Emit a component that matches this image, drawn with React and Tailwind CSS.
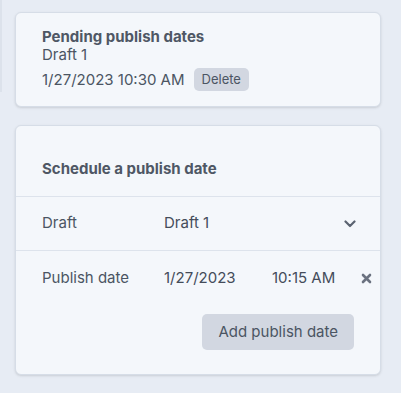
import React from 'react';

const Chevron = () => (
  <svg width="12" height="8" viewBox="0 0 12 8" fill="none">
    <path d="M1.5 1.5 6 6l4.5-4.5" stroke="#5b6371" strokeWidth="2.2" strokeLinecap="round" strokeLinejoin="round" />
  </svg>
);

const Cross = () => (
  <svg width="11" height="11" viewBox="0 0 11 11" fill="none">
    <path d="M2 2l7 7M9 2l-7 7" stroke="#6b7280" strokeWidth="2.6" strokeLinecap="round" />
  </svg>
);

const PendingCard = () => (
  <div className="bg-[#f4f7fb] border border-[#d6dde7] rounded-[6px] shadow-sm pl-[26px] pt-[15px] pb-[15px] text-[#4b5563] text-[15px]">
    <div className="leading-[18px] font-bold text-[#4f5765]">Pending publish dates</div>
    <div className="leading-[18px]">Draft 1</div>
    <div className="flex items-center gap-[9px] mt-[4px]">
      <span className="leading-[18px]">1/27/2023 10:30 AM</span>
      <button className="bg-[#d2d7e1] rounded-[5px] h-[23px] px-[8px] text-[13px] text-[#4b5563]">Delete</button>
    </div>
  </div>
);

const ScheduleCard = () => (
  <div className="bg-[#f4f7fb] border border-[#d6dde7] rounded-[6px] shadow-sm text-[#4b5563] text-[15px]">
    <div className="pl-[26px] pt-[33px] pb-[17px] border-b border-[#dde3ec]">
      <div className="leading-[20px] font-bold text-[#4f5765]">Schedule a publish date</div>
    </div>
    <div className="flex items-center h-[54px] pl-[26px] pr-[24px] border-b border-[#dde3ec]">
      <span className="w-[122px]">Draft</span>
      <span className="flex-1 text-[#444c5a]">Draft 1</span>
      <Chevron />
    </div>
    <div className="flex items-center h-[54px] pl-[26px] pr-[8px]">
      <span className="w-[122px]">Publish date</span>
      <span className="w-[108px] text-[#444c5a]">1/27/2023</span>
      <span className="flex-1 text-[#444c5a]">10:15 AM</span>
      <Cross />
    </div>
    <div className="flex justify-end pr-[26px] pt-[9px] pb-[24px]">
      <button className="bg-[#d2d7e1] rounded-[5px] h-[36px] px-[16px] text-[15px] text-[#4b5563]">Add publish date</button>
    </div>
  </div>
);

export default function App() {
  return (
    <div className="min-h-[393px] bg-[#e7ecf4] flex" style={{ fontFamily: 'Inter, "Noto Sans", sans-serif' }}>
      <div className="w-[2px] h-[92px] bg-[#dce2eb]" />
      <div className="flex-1 pl-[13px] pr-[20px] pt-[12px] pb-[18px] flex flex-col gap-[18px]">
        <PendingCard />
        <ScheduleCard />
      </div>
    </div>
  );
}
